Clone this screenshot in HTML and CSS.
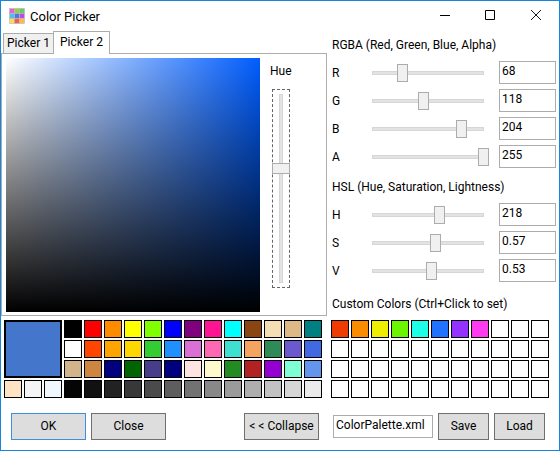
FILE: index.html
```html
<!DOCTYPE html>
<html lang="en">

<head>
  <meta charset="UTF-8">
  <meta name="viewport" content="width=device-width, initial-scale=1.0">
  <link rel="stylesheet" href="styles.css">
  <title>Color Picker</title>
</head>

<body>
  <div class="window">
    <div class="titlebar">
      <svg class="app-icon" width="16" height="16" viewBox="0 0 16 16" stroke="#b8b8b8" stroke-width="0.6">
        <rect x="0.5" y="0.5" width="5" height="5" fill="#ea5fd8" />
        <rect x="5.5" y="0.5" width="5" height="5" fill="#94cf3c" />
        <rect x="10.5" y="0.5" width="5" height="5" fill="#5fd05c" />
        <rect x="0.5" y="5.5" width="5" height="5" fill="#4cc0f0" />
        <rect x="5.5" y="5.5" width="5" height="5" fill="#4c78e0" />
        <rect x="10.5" y="5.5" width="5" height="5" fill="#b84ce8" />
        <rect x="0.5" y="10.5" width="5" height="5" fill="#ffd860" />
        <rect x="5.5" y="10.5" width="5" height="5" fill="#f06048" />
        <rect x="10.5" y="10.5" width="5" height="5" fill="#ffb850" />
      </svg>
      <span class="app-title">Color Picker</span>
      <div class="controls">
        <svg width="10" height="10" viewBox="0 0 10 10">
          <path d="M0 5.5H10" stroke="#000" fill="none" />
        </svg>
        <svg width="10" height="10" viewBox="0 0 10 10">
          <path d="M.5 .5H9.5V9.5H.5Z" stroke="#000" fill="none" />
        </svg>
        <svg class="close-icon" width="10" height="10" viewBox="0 0 10 10">
          <path d="M0 0L10 10M10 0L0 10" stroke="#000" stroke-width="0.9" fill="none" />
        </svg>
      </div>
    </div>

    <div class="main">
      <div class="left">
        <div class="tabs">
          <div class="tab">Picker 1</div>
          <div class="tab tabActive">Picker 2</div>
        </div>
        <div class="panel">
          <div class="square"></div>
          <div class="hue">
            <div class="hue-label">Hue</div>
            <div class="hue-box">
              <div class="hue-track"></div>
              <div class="hue-thumb"></div>
            </div>
          </div>
        </div>
      </div>

      <div class="right">
        <div class="heading">RGBA (Red, Green, Blue, Alpha)</div>
        <div class="sliders" id="rgba"></div>
        <div class="heading heading-hsl">HSL (Hue, Saturation, Lightness)</div>
        <div class="sliders" id="hsl"></div>
        <div class="heading heading-custom">Custom Colors (Ctrl+Click to set)</div>
      </div>
    </div>

    <div class="palettes">
      <div class="std-area">
        <div class="current"></div>
        <div class="std-grid" id="std"></div>
      </div>
      <div class="custom-grid" id="custom"></div>
    </div>

    <div class="actions">
      <div class="btn btn-ok">OK</div>
      <div class="btn">Close</div>
      <div class="btn btn-collapse">&lt; &lt; Collapse</div>
      <div class="file">ColorPalette.xml</div>
      <div class="btn btn-small">Save</div>
      <div class="btn btn-small">Load</div>
    </div>
  </div>

  <script>
    // slider rows: label, value, thumb left inside the 117px slider
    const rgbaRows = [["R", "68", 25], ["G", "118", 46], ["B", "204", 84], ["A", "255", 106]];
    const hslRows = [["H", "218", 62], ["S", "0.57", 58], ["V", "0.53", 54]];

    function setRows(el, rows) {
      rows.forEach(r => {
        let node = document.createElement("div");
        node.className = "row";
        node.innerHTML = `<div class="row-label">${r[0]}</div>
          <div class="slider">
            <div class="track"></div>
            <div class="thumb" style="left: ${r[2]}px"></div>
          </div>
          <div class="value">${r[1]}</div>`;
        el.append(node);
      });
    }
    setRows(document.querySelector("#rgba"), rgbaRows);
    setRows(document.querySelector("#hsl"), hslRows);

    // standard colors, the first three of the last row sit under the big swatch
    const stdColors = [
      "#000000", "#ff0000", "#ff8c00", "#ffff00", "#7fff00", "#0000ff", "#800080", "#ff1493", "#00ffff", "#8b4513", "#f5deb3", "#deb887", "#008080",
      "#ffffff", "#ff4500", "#ffa500", "#ffd700", "#32cd32", "#1e90ff", "#da70d6", "#ff69b4", "#40e0d0", "#f4a460", "#2e8b57", "#6a5acd", "#4169e1",
      "#d2b48c", "#cd853f", "#000080", "#006400", "#483d8b", "#000080", "#ffe4e1", "#fffacd", "#228b22", "#b22222", "#9400d3", "#7fffd4", "#6495ed",
      "#ffe4c4", "#f5f5f5", "#f0f8ff", "#050505", "#111111", "#222222", "#383838", "#4b4b4b", "#5e5e5e", "#727272", "#888888", "#9b9b9b", "#aeaeae", "#c2c2c2", "#d6d6d6", "#ebebeb"
    ];
    const std = document.querySelector("#std");
    const lastRowStart = 39;
    stdColors.forEach((c, i) => {
      let node = document.createElement("div");
      node.className = "swatch";
      node.style.backgroundColor = c;
      if (i >= lastRowStart && i < lastRowStart + 3) {
        document.querySelector(".std-area").insertBefore(node, std);
        node.classList.add("swatch-under");
      } else {
        std.append(node);
      }
    });

    const customColors = ["#ee3b00", "#f98c00", "#f0ee00", "#6bf500", "#1dffe6", "#2173ff", "#9433ff", "#ff3bf0"];
    const custom = document.querySelector("#custom");
    for (let i = 0; i < 44; i++) {
      let node = document.createElement("div");
      node.className = "swatch";
      node.style.backgroundColor = customColors[i] || "#ffffff";
      custom.append(node);
    }
  </script>
</body>

</html>
```

FILE: styles.css
```css
html,
body {
  margin: 0;
  height: 100%;
}

* {
  box-sizing: border-box;
}

body {
  background-color: #fff;
  font-family: Roboto, "Noto Sans", "Liberation Sans", sans-serif;
  font-size: 12px;
  color: #000;
  overflow: hidden;
}

.window {
  width: 560px;
  height: 451px;
  border: 1px solid #1a86d9;
  background-color: #fff;
  display: flex;
  flex-direction: column;
}

.titlebar {
  height: 30px;
  flex: none;
  display: flex;
  align-items: center;
  padding-left: 8px;
}

.app-title {
  margin-left: 5px;
  font-size: 13px;
}

.controls {
  margin-left: auto;
  display: flex;
  gap: 35px;
  padding-right: 18px;
  padding-bottom: 2px;
}

.close-icon {
  margin-left: 1px;
}

.main {
  height: 285px;
  flex: none;
  display: flex;
}

.left {
  width: 326px;
  flex: none;
}

.tabs {
  height: 22px;
  display: flex;
  align-items: flex-end;
  padding-left: 2px;
}

.tab {
  width: 51px;
  height: 20px;
  border: 1px solid #acacac;
  border-bottom: none;
  background-color: #f0f0f0;
  text-align: center;
  line-height: 18px;
}

.tabActive {
  width: 57px;
  height: 23px;
  margin-left: -1px;
  margin-bottom: -1px;
  background-color: #fff;
  position: relative;
  z-index: 1;
  line-height: 21px;
}

.panel {
  height: 263px;
  border: 1px solid #acacac;
  padding: 4px;
  display: flex;
}

.square {
  width: 254px;
  height: 254px;
  flex: none;
  background: linear-gradient(to top, #000, rgba(0, 0, 0, 0)), linear-gradient(to right, #fff, #005dff);
}

.hue {
  margin-left: 10px;
}

.hue-label {
  margin-top: 5px;
  line-height: 16px;
}

.hue-box {
  position: relative;
  width: 18px;
  height: 199px;
  margin-top: 10px;
  margin-left: 2px;
  border: 1px dashed #666;
}

.hue-track {
  width: 4px;
  height: 189px;
  margin: 4px auto 0;
  background-color: #e2e3e3;
  border: 1px solid #d6d6d6;
}

.hue-thumb {
  position: absolute;
  left: -1px;
  top: 73px;
  width: 18px;
  height: 11px;
  background-color: #f0f0f0;
  border: 1px solid #acacac;
}

.right {
  flex: 1;
  padding-left: 5px;
}

.heading {
  line-height: 16px;
  margin-top: 6px;
}

.sliders {
  margin-top: 8px;
}

.heading-hsl {
  margin-top: 11px;
}

.heading-custom {
  margin-top: 14px;
}

.row {
  height: 23px;
  margin-bottom: 5px;
  display: flex;
  align-items: center;
}

.row-label {
  width: 40px;
}

.slider {
  position: relative;
  width: 117px;
  height: 18px;
}

.track {
  position: absolute;
  left: 0;
  top: 7px;
  width: 112px;
  height: 4px;
  background-color: #e2e3e3;
  border: 1px solid #d6d6d6;
}

.thumb {
  position: absolute;
  top: 0;
  width: 11px;
  height: 18px;
  background-color: #f0f0f0;
  border: 1px solid #acacac;
}

.value {
  width: 57px;
  height: 23px;
  margin-left: 10px;
  border: 1px solid #acacac;
  padding-left: 2px;
  line-height: 18px;
}

.palettes {
  height: 78px;
  flex: none;
  margin-top: 4px;
  display: flex;
  padding-left: 3px;
}

.std-area {
  width: 327px;
  flex: none;
  display: grid;
  grid-template-columns: 18px 18px 18px 258px;
  grid-template-rows: 58px 18px;
  column-gap: 2px;
  row-gap: 2px;
}

.current {
  grid-column: 1 / 4;
  grid-row: 1;
  width: 58px;
  height: 58px;
  background-color: #4476cc;
  border: 2px solid #000;
}

.std-grid {
  grid-column: 4;
  grid-row: 1 / 3;
  display: grid;
  grid-template-columns: repeat(13, 18px);
  grid-auto-rows: 18px;
  gap: 2px;
}

.swatch-under {
  grid-row: 2;
}

.custom-grid {
  display: grid;
  grid-template-columns: repeat(11, 18px);
  grid-auto-rows: 18px;
  gap: 2px;
}

.swatch {
  width: 18px;
  height: 18px;
  border: 1px solid #000;
}

.actions {
  flex: none;
  height: 27px;
  margin-top: 15px;
  display: flex;
  align-items: center;
  padding-left: 10px;
}

.btn {
  width: 75px;
  height: 27px;
  margin-right: 5px;
  background-color: #dddddd;
  border: 1px solid #707070;
  text-align: center;
  line-height: 25px;
}

.btn-ok {
  border-color: #3c90e0;
}

.btn-collapse {
  margin-left: 73px;
  margin-right: 14px;
}

.file {
  width: 100px;
  height: 23px;
  margin-right: 5px;
  border: 1px solid #acacac;
  padding-left: 2px;
  line-height: 18px;
}

.btn-small {
  width: 51px;
}
```
